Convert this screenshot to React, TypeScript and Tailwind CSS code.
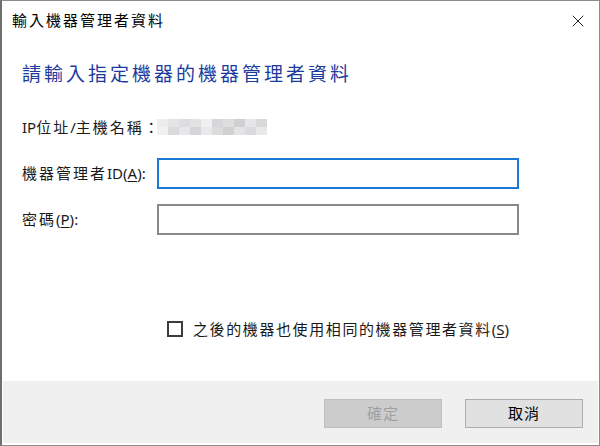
import { X } from "lucide-react";

const FONT = "font-['Noto_Sans','Noto_Sans_CJK_TC',sans-serif]";

// blurred host name mosaic (two rows of grey cells)
const mosaic = [
  ["#ececec", "#e4e4e4", "#dcdde0", "#e2e2e2", "#f0f0f0", "#d6d7da", "#dedede", "#cfd0d3", "#e6e6e6", "#d9d9d9"],
  ["#f1f1f1", "#dadada", "#e6e7ea", "#d4d5d8", "#e9e9e9", "#dcdcdc", "#d1d1d1", "#e4e4e4", "#dadbde", "#e8e8e8"],
];

const Mnemonic = ({ k }: { k: string }) => (
  <span>
    (<span className="underline underline-offset-2">{k}</span>)
  </span>
);

const App = () => {
  return (
    <div className={`w-[600px] h-[446px] bg-white text-black ${FONT}`}>
      <div className="w-full h-full flex flex-col border border-[#8c8c8c] border-l-2 border-l-[#6e6e6e]">
        {/* title bar */}
        <div className="h-[39px] flex items-center justify-between pl-[10px] pr-[11px]">
          <span className="text-[15px] tracking-[2px] leading-none">輸入機器管理者資料</span>
          <X className="w-[20px] h-[20px] text-[#111]" strokeWidth={1.1} />
        </div>

        {/* body */}
        <div className="flex-1 flex flex-col px-[20px]">
          <h1 className="mt-[20px] h-[28px] flex items-center text-[19px] tracking-[3px] text-[#1c3b9e] font-normal">
            請輸入指定機器的機器管理者資料
          </h1>

          <div className="mt-[27px] h-[24px] flex items-center text-[15px] text-[#1a1a1a] whitespace-nowrap">
            <span className="w-[135px] shrink-0">
              IP<span className="tracking-[2px]">位址</span>/<span className="tracking-[2px]">主機名稱</span>：
            </span>
            <div className="flex flex-col">
              {mosaic.map((row, i) => (
                <div key={i} className="flex">
                  {row.map((c, j) => (
                    <div key={j} className="w-[11px] h-[8px]" style={{ backgroundColor: c }} />
                  ))}
                </div>
              ))}
            </div>
          </div>

          <div className="mt-[19px] flex items-center text-[15px] text-[#1a1a1a] whitespace-nowrap">
            <span className="w-[135px] shrink-0">
              <span className="tracking-[2px]">機器管理者</span>ID<Mnemonic k="A" />:
            </span>
            <div className="w-[362px] h-[31px] border-2 border-[#1a78d6] bg-white" />
          </div>

          <div className="mt-[15px] flex items-center text-[15px] text-[#1a1a1a] whitespace-nowrap">
            <span className="w-[135px] shrink-0">
              <span className="tracking-[2px]">密碼</span>
              <Mnemonic k="P" />:
            </span>
            <div className="w-[362px] h-[31px] border-2 border-[#8a8a8a] bg-white" />
          </div>

          <div className="mt-auto mb-[41px] ml-[145px] flex items-center gap-[10px] text-[15px] text-[#1a1a1a] whitespace-nowrap">
            <div className="w-[16px] h-[16px] border-2 border-[#3c3c3c] bg-white" />
            <span>
              <span className="tracking-[1.6px]">之後的機器也使用相同的機器管理者資料</span>
              <Mnemonic k="S" />
            </span>
          </div>
        </div>

        {/* footer */}
        <div className="h-[62px] mx-[1px] mb-[2px] bg-[#f0f0f0] flex items-start justify-end gap-[23px] pt-[18px] pr-[15px]">
          <button className="w-[118px] h-[29px] bg-[#cccccc] border border-[#bfbfbf] text-[15px] tracking-[1px] text-[#a0a0a0]">
            確定
          </button>
          <button className="w-[118px] h-[29px] bg-[#e1e1e1] border border-[#adadad] text-[15px] tracking-[1px] text-black">
            取消
          </button>
        </div>
      </div>
    </div>
  );
};

export default App;
